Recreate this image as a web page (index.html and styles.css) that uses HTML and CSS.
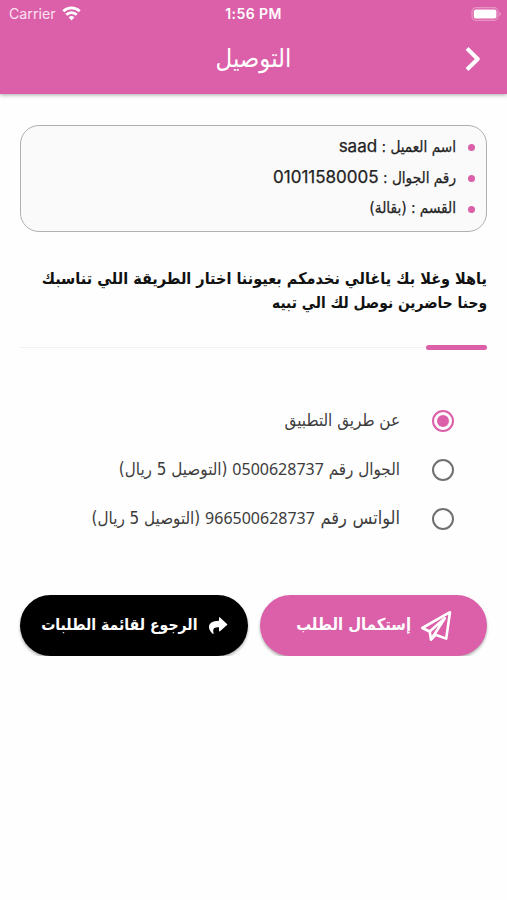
FILE: index.html
```html
<!DOCTYPE html>
<html lang="ar" dir="rtl">
<head>
  <meta charset="UTF-8" />
  <meta name="viewport" content="width=device-width, initial-scale=1.0"/>
  <title>التوصيل</title>
  <link rel="stylesheet" href="styles.css">
</head>
<body>
  <header class="header">
    <div class="status" dir="ltr">
      <div class="carrier">
        <span>Carrier</span>
        <svg width="19" height="15" viewBox="0 0 20 15" fill="none" stroke="#fff" stroke-width="2.9">
          <path d="M1.4 5.2 A12.3 12.3 0 0 1 18.6 5.2"/>
          <path d="M4.5 8.9 A7.9 7.9 0 0 1 15.5 8.9"/>
          <path d="M7 11.4 A4.5 4.5 0 0 1 13 11.4 L10 14.8 Z" fill="#fff" stroke="none"/>
        </svg>
      </div>
      <div class="time">1:56 PM</div>
      <svg class="battery" width="31" height="14" viewBox="0 0 31 14">
        <rect x="1" y="0.7" width="26" height="12.6" rx="4" fill="none" stroke="#e994c6" stroke-width="1.2"/>
        <rect x="2.8" y="2.4" width="22.6" height="9.2" rx="2" fill="#fff"/>
        <path d="M28.3 4.8 Q32 7 28.3 9.2 Z" fill="#e994c6"/>
      </svg>
    </div>
    <div class="title-bar">
      <svg class="back" width="16" height="26" viewBox="0 0 16 26" fill="none" stroke="#fff" stroke-width="4" stroke-linejoin="round">
        <path d="M2 2.5 L12.8 13 L2 23.5"/>
      </svg>
      <h1>التوصيل</h1>
    </div>
  </header>

  <main>
    <ul class="info">
      <li><span>اسم العميل : <b>saad</b></span></li>
      <li><span>رقم الجوال : <b>01011580005</b></span></li>
      <li><span>القسم : (بقالة)</span></li>
    </ul>

    <p class="welcome">
      ياهلا وغلا بك ياغالي نخدمكم بعيوننا اختار الطريقة اللي تناسبك<br>
      <span class="second">وحنا حاضرين نوصل لك الي تبيه</span>
    </p>
    <div class="divider"></div>

    <div class="options">
      <label class="option"><i class="radio checked"></i><span>عن طريق التطبيق</span></label>
      <label class="option"><i class="radio"></i><span>الجوال رقم <b>0500628737</b> (التوصيل 5 ريال)</span></label>
      <label class="option"><i class="radio"></i><span><span class="wide">الواتس رقم </span><b>966500628737</b> (التوصيل 5 ريال)</span></label>
    </div>

    <div class="buttons">
      <button class="btn send">
        <svg width="32" height="32" viewBox="0 0 32 32" fill="none" stroke="#fff" stroke-width="2.6" stroke-linejoin="round" stroke-linecap="round">
          <path d="M30 2.2 L2.3 18 L9.7 21.5 L11 29.5 L15.6 24.8 L26.2 28.6 Z"/>
          <path d="M9.7 21.5 L24.8 8.3 L14.5 24.3 L11 29.5"/>
        </svg>
        <span>إستكمال الطلب</span>
      </button>
      <button class="btn list">
        <svg width="20" height="18" viewBox="0 0 20 18" fill="#fff">
          <path d="M11 0.6 Q11.4 0 12 0.5 L19 6.9 Q19.6 7.4 19 8 L12 14.2 Q11 14.8 11 13.6 V10.3 C6.5 10.1 4.4 11.3 5.5 15.8 C5.8 17 5 17.2 4.3 16.4 C-1.7 10.4 0.4 4 11 3.8 Z"/>
        </svg>
        <span>الرجوع لقائمة الطلبات</span>
      </button>
    </div>
  </main>
</body>
</html>
```
FILE: styles.css
```css
* {
  box-sizing: border-box;
}
body {
  margin: 0;
  background: #fefefe;
  font-family: "DejaVu Sans Condensed", "DejaVu Sans", sans-serif;
  color: #222;
}
.header {
  height: 94px;
  background: #dc5fa9;
  color: #fff;
  box-shadow: 0 1px 4px rgba(0, 0, 0, 0.35);
}
.status {
  display: grid;
  grid-template-columns: 1fr auto 1fr;
  align-items: center;
  height: 27px;
  padding: 0 5px 0 9px;
  font-family: Inter, sans-serif;
}
.carrier {
  display: flex;
  align-items: center;
  gap: 6px;
  font-size: 14.2px;
  color: #fbe3f1;
}
.time {
  margin-right: 4px;
  font-weight: 600;
  font-size: 14px;
  letter-spacing: 0.4px;
}
.battery {
  justify-self: end;
}
.title-bar {
  display: grid;
  grid-template-columns: 40px 1fr 40px;
  align-items: center;
  height: 64px;
  padding: 0 14px;
}
.back {
  justify-self: center;
}
h1 {
  margin: 0;
  padding-bottom: 3px;
  font-size: 25.5px;
  font-weight: normal;
  line-height: 30px;
  text-align: center;
}
main {
  padding: 31px 20px 0;
}
.info {
  height: 107px;
  margin: 0;
  padding: 6px 11px 0;
  list-style: none;
  border: 1.5px solid #b0b0b0;
  border-radius: 19px;
  background: #fafafa;
  font-size: 15.2px;
  -webkit-text-stroke: 0.25px #222;
}
.info li {
  display: flex;
  align-items: center;
  gap: 12px;
  height: 31px;
  white-space: nowrap;
}
.info li::before {
  content: "";
  width: 7px;
  height: 7px;
  border-radius: 50%;
  background: #dc5fa9;
}
.info span {
  padding-bottom: 3px;
}
.info b {
  font-family: Inter, sans-serif;
  font-size: 17px;
  font-weight: 400;
}
.welcome {
  margin: 35px 0 0;
  font-size: 16.1px;
  font-weight: bold;
  line-height: 24px;
  white-space: nowrap;
  color: #111;
}
.second {
  font-size: 15.4px;
}
.divider {
  display: flex;
  align-items: center;
  height: 5px;
  margin-top: 30px;
}
.divider::before {
  content: "";
  width: 61px;
  height: 5px;
  border-radius: 3px;
  background: #dc5fa9;
}
.divider::after {
  content: "";
  flex: 1;
  height: 1px;
  background: #f1f1f1;
}
.options {
  margin-top: 46px;
  padding-right: 33px;
}
.option {
  display: flex;
  align-items: center;
  gap: 32px;
  height: 49px;
  font-size: 16.9px;
  white-space: nowrap;
  color: #3c3c3c;
}
.option > span {
  padding-bottom: 2px;
}
.option b {
  font-family: "Noto Sans", sans-serif;
  font-size: 16px;
  font-weight: 400;
}
.wide {
  font-size: 18px;
  word-spacing: 0.5px;
}
.radio {
  display: grid;
  place-items: center;
  width: 22px;
  height: 22px;
  border: 2.5px solid #707070;
  border-radius: 50%;
}
.radio.checked {
  border-color: #dc5fa9;
}
.radio.checked::before {
  content: "";
  width: 12px;
  height: 12px;
  border-radius: 50%;
  background: #dc5fa9;
}
.buttons {
  display: grid;
  grid-template-columns: 1fr 1fr;
  gap: 12px;
  margin-top: 52px;
}
.btn {
  display: flex;
  align-items: center;
  height: 61px;
  padding: 0;
  border: 0;
  border-radius: 31px;
  color: #fff;
  font-family: inherit;
  font-weight: bold;
  white-space: nowrap;
  box-shadow: 0 2px 3px rgba(0, 0, 0, 0.3);
}
.btn span {
  padding-bottom: 2px;
}
.send {
  padding-right: 35px;
  gap: 9px;
  background: #dc5fa9;
  font-size: 16.5px;
}
.list {
  padding-right: 20px;
  gap: 10px;
  background: #000;
  font-size: 15.7px;
}
```
